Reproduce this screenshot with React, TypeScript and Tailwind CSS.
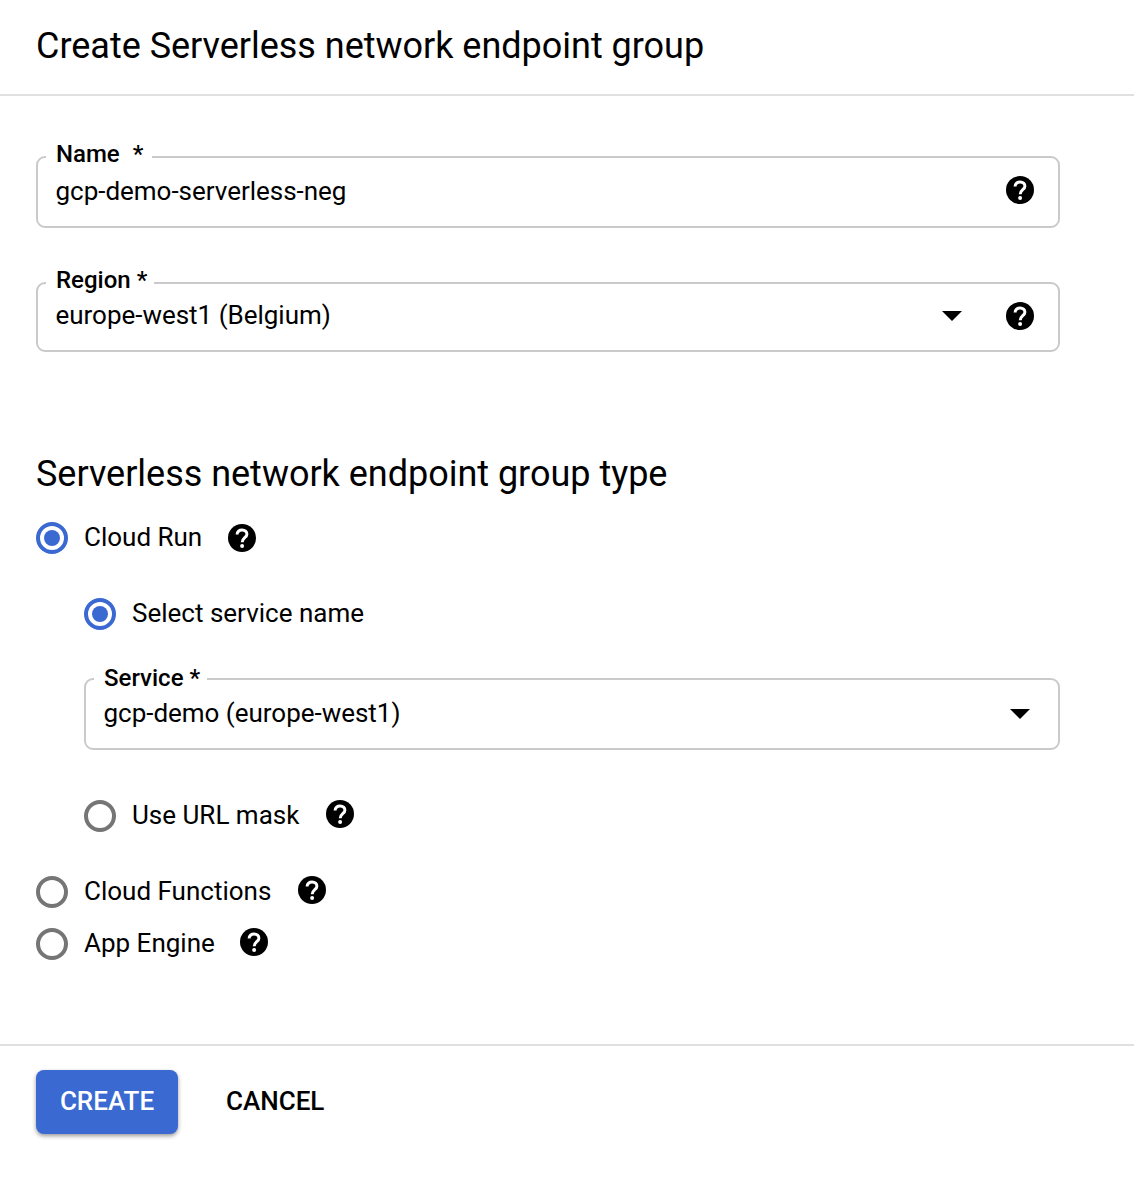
import React from "react";

function Help() {
  return (
    <svg className="block size-7 shrink-0" viewBox="0 0 28 28">
      <circle cx="14" cy="14" r="14" />
      <path d="M9.1 10.4C9.1 7.7 11.2 6.1 14.1 6.1c2.9 0 4.8 1.7 4.8 4.1 0 3.5-4.7 3.7-4.7 8.1" fill="none" stroke="#fff" strokeWidth="3" />
      <circle cx="14.1" cy="22" r="2" fill="#fff" />
    </svg>
  );
}

function Arrow() {
  return (
    <svg className="block h-2.5 w-5 shrink-0" viewBox="0 0 20 10">
      <path d="M0 0h20L10 10z" />
    </svg>
  );
}

function Radio({ checked = false }: { checked?: boolean }) {
  return (
    <span className={`flex size-8 shrink-0 items-center justify-center rounded-full border-4 ${checked ? "border-[#3b69d2]" : "border-[#757575]"}`}>
      {checked && <span className="size-4 rounded-full bg-[#3b69d2]" />}
    </span>
  );
}

function Option({ label, checked, helpClass, className }: { label: string; checked?: boolean; helpClass?: string; className: string }) {
  return (
    <div className={`flex h-8 items-center ${className}`}>
      <Radio checked={checked} />
      <span className="ml-4 whitespace-nowrap pb-0.5 text-[26px] leading-8">{label}</span>
      {helpClass && <span className={helpClass}><Help /></span>}
    </div>
  );
}

function Field({ label, labelClass, value, valueClass, className, children }: { label: string; labelClass: string; value: string; valueClass: string; className: string; children: React.ReactNode }) {
  return (
    <div className={`relative flex items-center rounded-[9px] border-2 border-[#cacaca] pl-[17.5px] ${className}`}>
      <span className={`absolute left-2 h-8 whitespace-pre bg-white pl-2.5 text-[24px] font-medium leading-8 ${labelClass}`}>{label}</span>
      <span className={`flex-1 text-[26px] leading-8 tracking-[-0.02px] ${valueClass}`}>{value}</span>
      {children}
    </div>
  );
}

export default function App() {
  return (
    <main className="flex h-[1180px] w-[1134px] flex-col bg-white font-['Roboto',sans-serif] text-black">
      <header className="h-24 border-b-2 border-[#e0e0e0] pl-9 pt-[22px]">
        <h1 className="text-[36px] font-normal leading-12 tracking-[-0.02px]">Create Serverless network endpoint group</h1>
      </header>
      <section className="flex h-[948px] flex-col pl-9 pr-[74px] pt-[60px]">
        <Field label="Name  *" labelClass="-top-5 w-[106px] [word-spacing:0.5px]" value="gcp-demo-serverless-neg" valueClass="pb-0.5" className="h-[72px] pr-6">
          <span className="pb-1"><Help /></span>
        </Field>
        <Field label="Region *" labelClass="-top-5 w-[108px]" value="europe-west1 (Belgium)" valueClass="pb-1" className="mt-[54px] h-[70px] pr-6">
          <span className="pb-0.5"><Arrow /></span>
          <span className="ml-11 pb-0.5"><Help /></span>
        </Field>
        <h2 className="mt-[98px] text-[36px] font-normal leading-12 tracking-[-0.02px]">Serverless network endpoint group type</h2>
        <Option label="Cloud Run" checked helpClass="ml-[26px]" className="mt-6" />
        <Option label="Select service name" checked className="ml-12 mt-11" />
        <Field label="Service *" labelClass="-top-[18px] w-[113px]" value="gcp-demo (europe-west1)" valueClass="pb-0.5" className="ml-12 mt-12 h-[72px] pr-7">
          <Arrow />
        </Field>
        <Option label="Use URL mask" helpClass="ml-[27px] pb-1" className="ml-12 mt-[50px]" />
        <Option label="Cloud Functions" helpClass="ml-[27px] pb-1" className="mt-11" />
        <Option label="App Engine" helpClass="ml-[25px] pb-1" className="mt-5" />
      </section>
      <footer className="flex grow items-start border-t-2 border-[#e0e0e0] pl-9 pt-6">
        <button className="h-16 w-[142px] rounded-lg bg-[#3b69d2] pb-0.5 text-[26px] font-medium text-white shadow-[0_2px_4px_rgba(0,0,0,0.4)]">CREATE</button>
        <button className="ml-12 h-16 pb-0.5 text-[26px] font-medium">CANCEL</button>
      </footer>
    </main>
  );
}
